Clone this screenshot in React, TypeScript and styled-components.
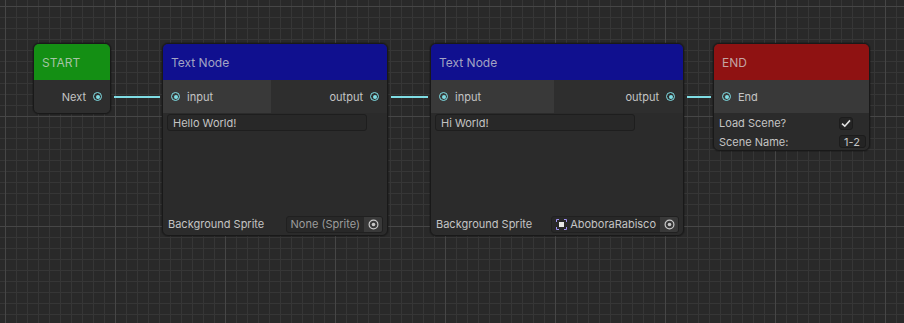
import React from 'react'
import styled, { createGlobalStyle } from 'styled-components'

const GlobalStyle = createGlobalStyle`
    html, body {
        margin: 0;
        padding: 0;
        background: #282828;
    }
    * {
        box-sizing: border-box;
    }
`

const EDGE = '#7fdde4'
const TEXT = '#c4c4c4'

// graph canvas with the unity-like grid
const Canvas = styled.div`
    position: relative;
    width: 904px;
    height: 323px;
    overflow: hidden;
    font-family: "Inter", "Noto Sans", sans-serif;
    font-size: 11px;
    color: ${TEXT};
    background-color: #292929;
    background-image:
        linear-gradient(to right, #464646 1px, transparent 1px),
        linear-gradient(to bottom, #464646 1px, transparent 1px),
        linear-gradient(to right, #363636 1px, transparent 1px),
        linear-gradient(to bottom, #363636 1px, transparent 1px);
    background-size: 110px 110px, 110px 110px, 11px 11px, 11px 11px;
    background-position: 5px 6px, 5px 6px, 5px 6px, 5px 6px;
`

const Edges = styled.svg`
    position: absolute;
    inset: 0;
    pointer-events: none;
`

const Node = styled.div<{ $x: number; $y: number; $w: number; $h: number }>`
    position: absolute;
    left: ${p => p.$x}px;
    top: ${p => p.$y}px;
    width: ${p => p.$w}px;
    height: ${p => p.$h}px;
    display: flex;
    flex-direction: column;
    background: #2b2b2b;
    border: 1px solid #191919;
    border-radius: 6px;
    overflow: hidden;
    box-shadow: 0 0 0 1px rgba(0,0,0,0.15);
`

const Header = styled.div<{ $color: string }>`
    height: 36px;
    flex-shrink: 0;
    display: flex;
    align-items: center;
    padding-left: 8px;
    background: ${p => p.$color};
    color: rgba(214, 214, 214, 0.75);
    font-size: 12px;
`

const PortRow = styled.div`
    height: 33px;
    flex-shrink: 0;
    display: flex;
    background: #2e2e2e;
`

const PortCell = styled.div<{ $w?: number; $bg: string; $right?: boolean }>`
    ${p => (p.$w ? `width: ${p.$w}px;` : 'flex: 1;')}
    display: flex;
    align-items: center;
    justify-content: ${p => (p.$right ? 'flex-end' : 'flex-start')};
    gap: 7px;
    padding: ${p => (p.$right ? '0 8px 0 0' : '0 0 0 8px')};
    background: ${p => p.$bg};
`

const Port = styled.span`
    width: 9px;
    height: 9px;
    border-radius: 50%;
    border: 1.5px solid ${EDGE};
    display: flex;
    align-items: center;
    justify-content: center;
    &::after {
        content: '';
        width: 4px;
        height: 4px;
        border-radius: 50%;
        background: ${EDGE};
    }
`

const Body = styled.div`
    flex: 1;
    display: flex;
    flex-direction: column;
    padding: 1px 4px 2px 4px;
`

const TextField = styled.div`
    width: 200px;
    height: 17px;
    display: flex;
    align-items: center;
    padding-left: 5px;
    background: #282828;
    border: 1px solid #1e1e1e;
    border-radius: 3px;
`

const Spacer = styled.div`
    flex: 1;
`

const FieldRow = styled.div<{ $h: number }>`
    height: ${p => p.$h}px;
    display: flex;
    align-items: center;
    justify-content: space-between;
    padding-left: 1px;
`

const ObjectField = styled.div`
    height: 17px;
    display: flex;
    align-items: center;
    background: #282828;
    border: 1px solid #202020;
    border-radius: 3px;
    overflow: hidden;
`

const ObjectName = styled.span<{ $dim?: boolean }>`
    display: flex;
    align-items: center;
    gap: 3px;
    padding: 0 4px;
    color: ${p => (p.$dim ? '#9c9c9c' : TEXT)};
`

const PickButton = styled.span`
    width: 18px;
    height: 100%;
    display: flex;
    align-items: center;
    justify-content: center;
    background: #393939;
`

const Toggle = styled.span`
    width: 14px;
    height: 13px;
    display: flex;
    align-items: center;
    justify-content: center;
    background: #242424;
    border: 1px solid #1c1c1c;
    border-radius: 3px;
    margin-right: 13px;
`

const SmallField = styled.span`
    width: 27px;
    height: 13px;
    display: flex;
    align-items: center;
    padding-left: 4px;
    background: #242424;
    border: 1px solid #1c1c1c;
    border-radius: 3px;
`

const EndBody = styled.div`
    flex: 1;
    display: flex;
    flex-direction: column;
    padding: 1px 3px 2px 4px;
`

const TargetIcon = () => (
    <svg width="11" height="11" viewBox="0 0 11 11">
        <circle cx="5.5" cy="5.5" r="4.4" fill="none" stroke="#c8c8c8" strokeWidth="1.2" />
        <circle cx="5.5" cy="5.5" r="1.8" fill="#c8c8c8" />
    </svg>
)

const SpriteIcon = () => (
    <svg width="11" height="11" viewBox="0 0 11 11">
        <path d="M0.5 3V0.5H3M8 0.5H10.5V3M10.5 8V10.5H8M3 10.5H0.5V8" fill="none" stroke="#9d8ff0" strokeWidth="1" />
        <rect x="3" y="3" width="5" height="5" fill="#e6e6e6" />
    </svg>
)

const Check = () => (
    <svg width="10" height="9" viewBox="0 0 10 9">
        <path d="M1 4.6L3.8 7.2L9 1.4" fill="none" stroke="#e0e0e0" strokeWidth="1.6" />
    </svg>
)

interface TextNodeProps {
    x: number;
    w: number;
    inputW: number;
    text: string;
    sprite?: string;
}

const TextNode = ({ x, w, inputW, text, sprite }: TextNodeProps) => (
    <Node $x={x} $y={43} $w={w} $h={193}>
        <Header $color="#10108f">Text Node</Header>
        <PortRow>
            <PortCell $w={inputW} $bg="#393939">
                <Port />
                input
            </PortCell>
            <PortCell $bg="#2e2e2e" $right>
                output
                <Port />
            </PortCell>
        </PortRow>
        <Body>
            <TextField>{text}</TextField>
            <Spacer />
            <FieldRow $h={18}>
                Background Sprite
                <ObjectField>
                    {sprite ? (
                        <ObjectName>
                            <SpriteIcon />
                            {sprite}
                        </ObjectName>
                    ) : (
                        <ObjectName $dim>None (Sprite)</ObjectName>
                    )}
                    <PickButton>
                        <TargetIcon />
                    </PickButton>
                </ObjectField>
            </FieldRow>
        </Body>
    </Node>
)

const App = () => {
    return (
        <Canvas>
            <GlobalStyle />
            <Edges width="904" height="323">
                <line x1="114" y1="97" x2="160" y2="97" stroke={EDGE} strokeWidth="2" />
                <line x1="391" y1="97" x2="428" y2="97" stroke={EDGE} strokeWidth="2" />
                <line x1="687" y1="97" x2="711" y2="97" stroke={EDGE} strokeWidth="2" />
            </Edges>

            <Node $x={33} $y={43} $w={78} $h={71}>
                <Header $color="#148f14">START</Header>
                <PortRow>
                    <PortCell $bg="#2e2e2e" $right>
                        Next
                        <Port />
                    </PortCell>
                </PortRow>
            </Node>

            <TextNode x={162} w={226} inputW={108} text="Hello World!" />
            <TextNode x={430} w={254} inputW={123} text="Hi World!" sprite="AboboraRabisco" />

            <Node $x={713} $y={43} $w={157} $h={108}>
                <Header $color="#8f1212">END</Header>
                <PortRow>
                    <PortCell $bg="#393939">
                        <Port />
                        End
                    </PortCell>
                </PortRow>
                <EndBody>
                    <FieldRow $h={18}>
                        Load Scene?
                        <Toggle>
                            <Check />
                        </Toggle>
                    </FieldRow>
                    <FieldRow $h={19}>
                        Scene Name:
                        <SmallField>1-2</SmallField>
                    </FieldRow>
                </EndBody>
            </Node>
        </Canvas>
    )
}

export default App
